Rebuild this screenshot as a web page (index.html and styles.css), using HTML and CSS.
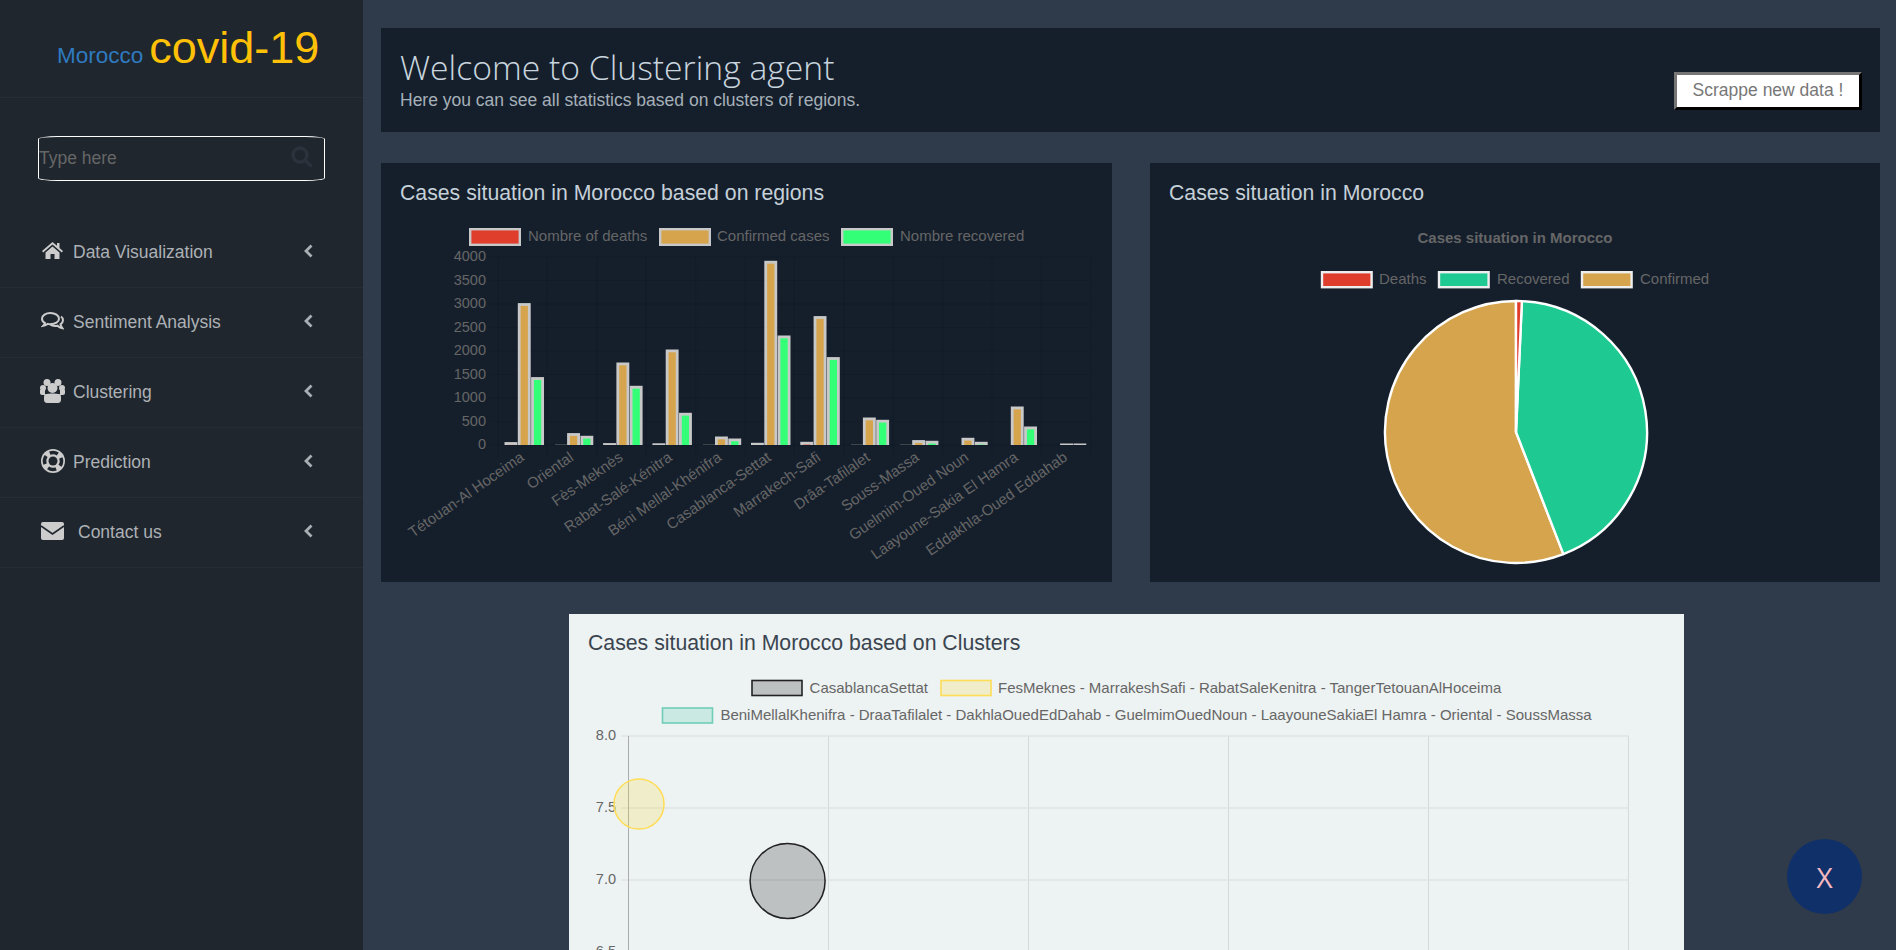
FILE: index.html
```html
<!DOCTYPE html>
<html lang="en">
<head>
  <meta charset="UTF-8">
  <title>Clustering agent</title>
  <link rel="stylesheet" href="styles.css">
</head>
<body>
  <aside class="sidebar">
    <div class="brand">
      <span class="brand-country">Morocco</span>
      <span class="brand-name">covid-19</span>
    </div>
    <div class="search">
      <input class="search-input" type="text" placeholder="Type here">
      <svg class="search-icon" viewBox="0 0 22 22"><circle cx="9" cy="9" r="7"/><path d="M14 14l6.5 6.5"/></svg>
    </div>
    <ul class="menu">
      <li class="menu-item">
        <span class="menu-icon"><svg width="21" height="17" viewBox="0 0 21 17"><path class="fill" d="M10.5 0L0 9l1.2 1.4 9.3-7.9 9.3 7.9L21 9l-3.5-3V1H15v2.8z"/><path class="fill" d="M3.5 10.5l7-5.9 7 5.9V17h-5v-5h-4v5h-5z"/></svg></span>
        <span>Data Visualization</span>
        <svg class="chevron" width="9" height="14" viewBox="0 0 9 14"><path d="M7.5 1.5L2 7l5.5 5.5"/></svg>
      </li>
      <li class="menu-item">
        <span class="menu-icon"><svg width="23" height="18" viewBox="0 0 23 18"><path class="line" d="M9.5 1C4.8 1 1 3.500 1 6.700c0 1.800 1.200 3.300 3 4.400-.3 1-.9 1.900-1.700 2.700 1.700-.3 3.200-1 4.300-1.900 1 .3 1.900.4 2.900.4 4.700 0 8.500-2.500 8.500-5.600S14.200 1 9.500 1z"/><path class="line" d="M20 4.500c1.300 1 2 2.300 2 3.700 0 1.700-1 3.100-2.500 4.100.2 1.400.9 2.500 2 4-2-.4-3.800-1.300-5-2.600-2.700.5-5.700 0-7.500-1.500"/></svg></span>
        <span>Sentiment Analysis</span>
        <svg class="chevron" width="9" height="14" viewBox="0 0 9 14"><path d="M7.500 1.500L2 7l5.500 5.500"/></svg>
      </li>
      <li class="menu-item">
        <span class="menu-icon"><svg width="25" height="24" viewBox="0 0 25 24"><circle class="fill" cx="7" cy="3.500" r="3.500"/><circle class="fill" cx="18" cy="3.500" r="3.500"/><circle class="fill" cx="3" cy="9" r="3"/><circle class="fill" cx="22" cy="9" r="3"/><path class="fill" d="M0 11h5v5H2c-1 0-2-.8-2-2zM20 11h5v3c0 1.200-1 2-2 2h-3z"/><circle class="fill" cx="12.500" cy="9" r="5"/><path class="fill" d="M6 15c2 0 2.500-.5 6.500-.5s4.500.5 6.500.5c1.500 0 2 1.500 2 3.500V21c0 2-1.500 3-3 3H7c-1.500 0-3-1-3-3v-2.500C4 16.500 4.500 15 6 15z"/></svg></span>
        <span>Clustering</span>
        <svg class="chevron" width="9" height="14" viewBox="0 0 9 14"><path d="M7.500 1.500L2 7l5.500 5.500"/></svg>
      </li>
      <li class="menu-item">
        <span class="menu-icon"><svg width="24" height="24" viewBox="0 0 24 24"><circle class="fill" cx="12" cy="12" r="12"/><circle class="ring-gap" cx="12" cy="12" r="8.500" transform="rotate(-112.500 12 12)"/><circle class="hole" cx="12" cy="12" r="4.500"/></svg></span>
        <span>Prediction</span>
        <svg class="chevron" width="9" height="14" viewBox="0 0 9 14"><path d="M7.500 1.500L2 7l5.500 5.500"/></svg>
      </li>
      <li class="menu-item">
        <span class="menu-icon"><svg width="23" height="18" viewBox="0 0 23 18"><rect class="fill" width="23" height="18" rx="2"/><path class="cut" d="M0 4l11.500 8L23 4"/></svg></span>
        <span class="menu-text-wide">Contact us</span>
        <svg class="chevron" width="9" height="14" viewBox="0 0 9 14"><path d="M7.500 1.500L2 7l5.500 5.500"/></svg>
      </li>
    </ul>
  </aside>

  <main class="content">
    <header class="welcome">
      <div>
        <h1>Welcome to Clustering agent</h1>
        <p>Here you can see all statistics based on clusters of regions.</p>
      </div>
      <button class="scrape-btn">Scrappe new data !</button>
    </header>

    <section class="chart-row">
      <div class="card">
        <h3 class="card-title">Cases situation in Morocco based on regions</h3>
        <svg class="chart chart-regions" viewBox="381 203 731 379">
          <rect class="swatch red" x="470.200" y="229.200" width="49.600" height="15.600"/>
          <text class="legend" x="528" y="241">Nombre of deaths</text>
          <rect class="swatch tan" x="660.200" y="229.200" width="49.600" height="15.600"/>
          <text class="legend" x="717" y="241">Confirmed cases</text>
          <rect class="swatch lime" x="842.200" y="229.200" width="49.600" height="15.600"/>
          <text class="legend" x="900" y="241">Nombre recovered</text>

          <path class="grid-dark" d="M490 257H1091M490 280.500H1091M490 304H1091M490 327.500H1091M490 351H1091M490 374.500H1091M490 398H1091M490 421.500H1091M490 445H1091M498 257V457M547.400 257V457M596.800 257V457M646.200 257V457M695.600 257V457M745 257V457M794.400 257V457M843.800 257V457M893.200 257V457M942.600 257V457M992 257V457M1041.400 257V457M1090.800 257V457"/>

          <text class="tick" x="486" y="261">4000</text>
          <text class="tick" x="486" y="284.500">3500</text>
          <text class="tick" x="486" y="308">3000</text>
          <text class="tick" x="486" y="331.500">2500</text>
          <text class="tick" x="486" y="355">2000</text>
          <text class="tick" x="486" y="378.500">1500</text>
          <text class="tick" x="486" y="402">1000</text>
          <text class="tick" x="486" y="425.500">500</text>
          <text class="tick" x="486" y="449">0</text>

          <clipPath id="plot"><rect x="498" y="250" width="600" height="195"/></clipPath>
          <g clip-path="url(#plot)">
            <rect class="bar red" x="505.900" y="443.500" width="10.100" height="7"/>
            <rect class="bar tan" x="519.200" y="304.500" width="10.100" height="146"/>
            <rect class="bar lime" x="532.500" y="378.500" width="10.100" height="72"/>
            <rect class="bar tan" x="568.500" y="434.500" width="10.100" height="16"/>
            <rect class="bar lime" x="581.800" y="437.200" width="10.100" height="13"/>
            <rect class="bar red" x="604.500" y="444.500" width="10.100" height="6"/>
            <rect class="bar tan" x="617.800" y="363.900" width="10.100" height="87"/>
            <rect class="bar lime" x="631.100" y="387.200" width="10.100" height="63"/>
            <rect class="bar red" x="653.800" y="444.700" width="10.100" height="6"/>
            <rect class="bar tan" x="667.100" y="350.900" width="10.100" height="100"/>
            <rect class="bar lime" x="680.400" y="414.200" width="10.100" height="36"/>
            <rect class="bar tan" x="716.400" y="437.900" width="10.100" height="13"/>
            <rect class="bar lime" x="729.700" y="439.900" width="10.100" height="11"/>
            <rect class="bar red" x="752.400" y="444.200" width="10.100" height="6"/>
            <rect class="bar tan" x="765.700" y="262.200" width="10.100" height="188"/>
            <rect class="bar lime" x="779" y="336.900" width="10.100" height="114"/>
            <rect class="bar red" x="801.700" y="443.200" width="10.100" height="7"/>
            <rect class="bar tan" x="815" y="317.500" width="10.100" height="133"/>
            <rect class="bar lime" x="828.300" y="358.500" width="10.100" height="92"/>
            <rect class="bar tan" x="864.300" y="418.900" width="10.100" height="32"/>
            <rect class="bar lime" x="877.600" y="421.200" width="10.100" height="29"/>
            <rect class="bar tan" x="913.600" y="441.500" width="10.100" height="9"/>
            <rect class="bar lime" x="926.900" y="442.200" width="10.100" height="8"/>
            <rect class="bar tan" x="962.900" y="439.200" width="10.100" height="11"/>
            <rect class="bar lime" x="976.200" y="443.200" width="10.100" height="7"/>
            <rect class="bar tan" x="1012.200" y="407.900" width="10.100" height="42"/>
            <rect class="bar lime" x="1025.500" y="427.900" width="10.100" height="22"/>
            <rect class="bar tan" x="1061.500" y="444.900" width="10.100" height="6"/>
            <rect class="bar lime" x="1074.800" y="444.900" width="10.100" height="6"/>
            <path class="bar-stub" d="M555 444.600h12M703 444.600h12M851 444.600h12M900 444.600h12"/>
          </g>

          <text class="tick-x" x="525" y="459.500" transform="rotate(-35 525 459.500)">Tétouan-Al Hoceima</text>
          <text class="tick-x" x="574.400" y="459.500" transform="rotate(-35 574.400 459.500)">Oriental</text>
          <text class="tick-x" x="623.800" y="459.500" transform="rotate(-35 623.800 459.500)">Fès-Meknès</text>
          <text class="tick-x" x="673.200" y="459.500" transform="rotate(-35 673.200 459.500)">Rabat-Salé-Kénitra</text>
          <text class="tick-x" x="722.600" y="459.500" transform="rotate(-35 722.600 459.500)">Béni Mellal-Khénifra</text>
          <text class="tick-x" x="772" y="459.500" transform="rotate(-35 772 459.500)">Casablanca-Settat</text>
          <text class="tick-x" x="821.400" y="459.500" transform="rotate(-35 821.400 459.500)">Marrakech-Safi</text>
          <text class="tick-x" x="870.800" y="459.500" transform="rotate(-35 870.800 459.500)">Drâa-Tafilalet</text>
          <text class="tick-x" x="920.200" y="459.500" transform="rotate(-35 920.200 459.500)">Souss-Massa</text>
          <text class="tick-x" x="969.600" y="459.500" transform="rotate(-35 969.600 459.500)">Guelmim-Oued Noun</text>
          <text class="tick-x" x="1019" y="459.500" transform="rotate(-35 1019 459.500)">Laayoune-Sakia El Hamra</text>
          <text class="tick-x" x="1068.400" y="459.500" transform="rotate(-35 1068.400 459.500)">Eddakhla-Oued Eddahab</text>
        </svg>
      </div>

      <div class="card">
        <h3 class="card-title">Cases situation in Morocco</h3>
        <svg class="chart chart-pie" viewBox="1150 203 730 379">
          <text class="pie-title" x="1515" y="243">Cases situation in Morocco</text>
          <rect class="swatch-pie red" x="1322" y="272.200" width="49.600" height="15"/>
          <text class="legend" x="1379" y="284">Deaths</text>
          <rect class="swatch-pie teal" x="1439" y="272.200" width="49.600" height="15"/>
          <text class="legend" x="1497" y="284">Recovered</text>
          <rect class="swatch-pie tan" x="1582" y="272.200" width="49.600" height="15"/>
          <text class="legend" x="1640" y="284">Confirmed</text>
          <path class="slice tan" d="M1516 432L1563.400 554.100A131 131 0 1 1 1516 301Z"/>
          <path class="slice teal" d="M1516 432L1521.900 301.100A131 131 0 0 1 1563.400 554.100Z"/>
          <path class="slice red" d="M1516 432L1516 301A131 131 0 0 1 1521.900 301.100Z"/>
        </svg>
      </div>
    </section>

    <section class="card card-light">
      <h3 class="card-title">Cases situation in Morocco based on Clusters</h3>
      <svg class="chart chart-clusters" viewBox="569 654 1115 300">
        <rect class="swatch-bubble gray" x="752" y="680.500" width="50" height="15"/>
        <text class="legend-light" x="809.600" y="692.500">CasablancaSettat</text>
        <rect class="swatch-bubble yellow" x="941" y="680.500" width="50" height="15"/>
        <text class="legend-light" x="998" y="692.500">FesMeknes - MarrakeshSafi - RabatSaleKenitra - TangerTetouanAlHoceima</text>
        <rect class="swatch-bubble green" x="662.500" y="708" width="50" height="15"/>
        <text class="legend-light" x="720.400" y="719.500">BeniMellalKhenifra - DraaTafilalet - DakhlaOuedEdDahab - GuelmimOuedNoun - LaayouneSakiaEl Hamra - Oriental - SoussMassa</text>

        <path class="grid-v" d="M828.500 736V954M1028.500 736V954M1228.500 736V954M1428.500 736V954M1628.500 736V954"/>
        <path class="grid-h" d="M621 736H1629M621 808H1629M621 880H1629M621 952H1629"/>
        <path class="axis-y" d="M628.500 736V954"/>

        <text class="tick-light" x="616" y="740">8.0</text>
        <text class="tick-light" x="616" y="812">7.5</text>
        <text class="tick-light" x="616" y="884">7.0</text>
        <text class="tick-light" x="616" y="956">6.5</text>

        <circle class="bubble yellow" cx="639" cy="804" r="25"/>
        <circle class="bubble gray" cx="787.600" cy="881" r="37.500"/>
      </svg>
    </section>
  </main>

  <button class="close-btn">X</button>
</body>
</html>
```

FILE: styles.css
```css
* { box-sizing: border-box; }
body { margin: 0; height: 100vh; overflow: hidden; display: flex; background: #2f3b4a; font-family: "Liberation Sans", Arial, sans-serif; }

.sidebar { width: 363px; flex-shrink: 0; background: #1f262e; }
.brand { height: 98px; padding: 23px 0 0 57px; display: flex; align-items: baseline; gap: 6px; border-bottom: 1px solid #272c37; }
.brand-country { font-size: 22.500px; color: #2f7ac0; }
.brand-name { font-size: 45px; color: #ffc107; line-height: 50px; }

.search { position: relative; width: 287px; height: 45px; margin: 38px 0 0 38px; }
.search-input { width: 100%; height: 100%; padding: 0; background: transparent; border: 1px solid #fff; border-radius: 20px / 3px; font: 17.500px "Liberation Sans", Arial, sans-serif; color: #ccc; outline: none; }
.search-input::placeholder { color: #666; opacity: 1; }
.search-icon { position: absolute; top: 10px; right: 12px; width: 22px; height: 22px; fill: none; stroke: #2b323b; stroke-width: 3.500; }

.menu { list-style: none; margin: 37px 0 0; padding: 0; }
.menu-item { height: 70px; padding: 0 50px 0 40px; display: flex; align-items: center; font-size: 17.500px; color: #adb1b5; border-bottom: 1px solid #252c35; }
.menu-icon { width: 25px; margin: -4px 8px 0 0; display: flex; justify-content: center; }
.menu-icon svg { display: block; }
.menu-text-wide { margin-left: 5px; }
.fill { fill: #ccc; }
.line { fill: none; stroke: #ccc; stroke-width: 2; }
.cut { fill: none; stroke: #1f262e; stroke-width: 1.600; }
.ring-gap { fill: none; stroke: #1f262e; stroke-width: 3.500; stroke-dasharray: 8.350 5; }
.hole { fill: #1f262e; }
.chevron { margin: -3px 0 0 auto; fill: none; stroke: #a9afb5; stroke-width: 2.800; }

.content { flex: 1; min-width: 0; padding: 28px 16px 0 18px; }

.welcome { height: 104px; padding: 0 18px 22px 19px; display: flex; justify-content: space-between; align-items: flex-end; background: #151f2c; }
.welcome h1 { margin: 0 0 3px; font: 300 33.700px/40px "Open Sans", sans-serif; color: #c9d5de; }
.welcome p { margin: 0; font-size: 17.500px; line-height: 20px; color: #a6b0b8; }
.scrape-btn { width: 188px; height: 38px; padding: 0 0 2px; background: #fff; border: 3px outset #777; border-color: #767676 #222 #222 #767676; font: 17.500px "Liberation Sans", Arial, sans-serif; color: #777; }

.chart-row { display: grid; grid-template-columns: 731px 730px; gap: 38px; margin-top: 31px; }
.card { height: 419px; background: #151f2c; }
.card-title { margin: 0; padding: 18px 18px 0 19px; height: 40px; font-size: 21.250px; line-height: 24px; font-weight: 400; color: #c5d0d8; }
.chart { display: block; width: 100%; height: 379px; font-family: "Liberation Sans", Arial, sans-serif; }

.card-light { width: 1115px; height: 400px; margin: 32px 0 0 188px; background: #edf2f2; }
.card-light .card-title { color: #3a444f; padding-top: 17px; }
.chart-clusters { height: 300px; }

.legend { font-size: 15px; fill: #666; }
.tick { font-size: 14.500px; fill: #666; text-anchor: end; }
.tick-x { font-size: 15px; fill: #666; text-anchor: end; }
.legend-light { font-size: 15px; fill: #666; }
.tick-light { font-size: 14.500px; fill: #666; text-anchor: end; }
.pie-title { font-size: 15px; font-weight: 700; fill: #666; text-anchor: middle; }

.grid-dark { fill: none; stroke: #121b27; stroke-width: 1; }
.grid-v { fill: none; stroke: #d4d9d9; stroke-width: 1; }
.grid-h { fill: none; stroke: #dfe4e4; stroke-width: 1.600; }
.axis-y { fill: none; stroke: #a8acac; stroke-width: 1; }

.red { fill: #e03e2d; }
.tan { fill: #d6a44c; }
.lime { fill: #33ff77; }
.teal { fill: #1fc992; }

.swatch { stroke: #c8c8c8; stroke-width: 2.400; }
.swatch-pie { stroke: #eee; stroke-width: 2.400; }
.bar { stroke: #c8c8c8; stroke-width: 2.800; }
.bar-stub { fill: none; stroke: #444a50; stroke-width: 1; }
.slice { stroke: #fff; stroke-width: 2.400; stroke-linejoin: round; }

.gray { fill: rgba(0, 0, 0, .2); stroke: #222; }
.yellow { fill: rgba(255, 221, 50, .2); stroke: #ffdd57; }
.green { fill: rgba(72, 199, 170, .2); stroke: #6fcdb8; }
.swatch-bubble { stroke-width: 1.600; }
.bubble { stroke-width: 1.500; }

.close-btn { position: fixed; right: 34px; bottom: 36px; width: 75px; height: 75px; padding: 0; border: none; border-radius: 50%; background: #10306a; color: #f4b8c0; font: 400 28px "Open Sans", sans-serif; }
```
